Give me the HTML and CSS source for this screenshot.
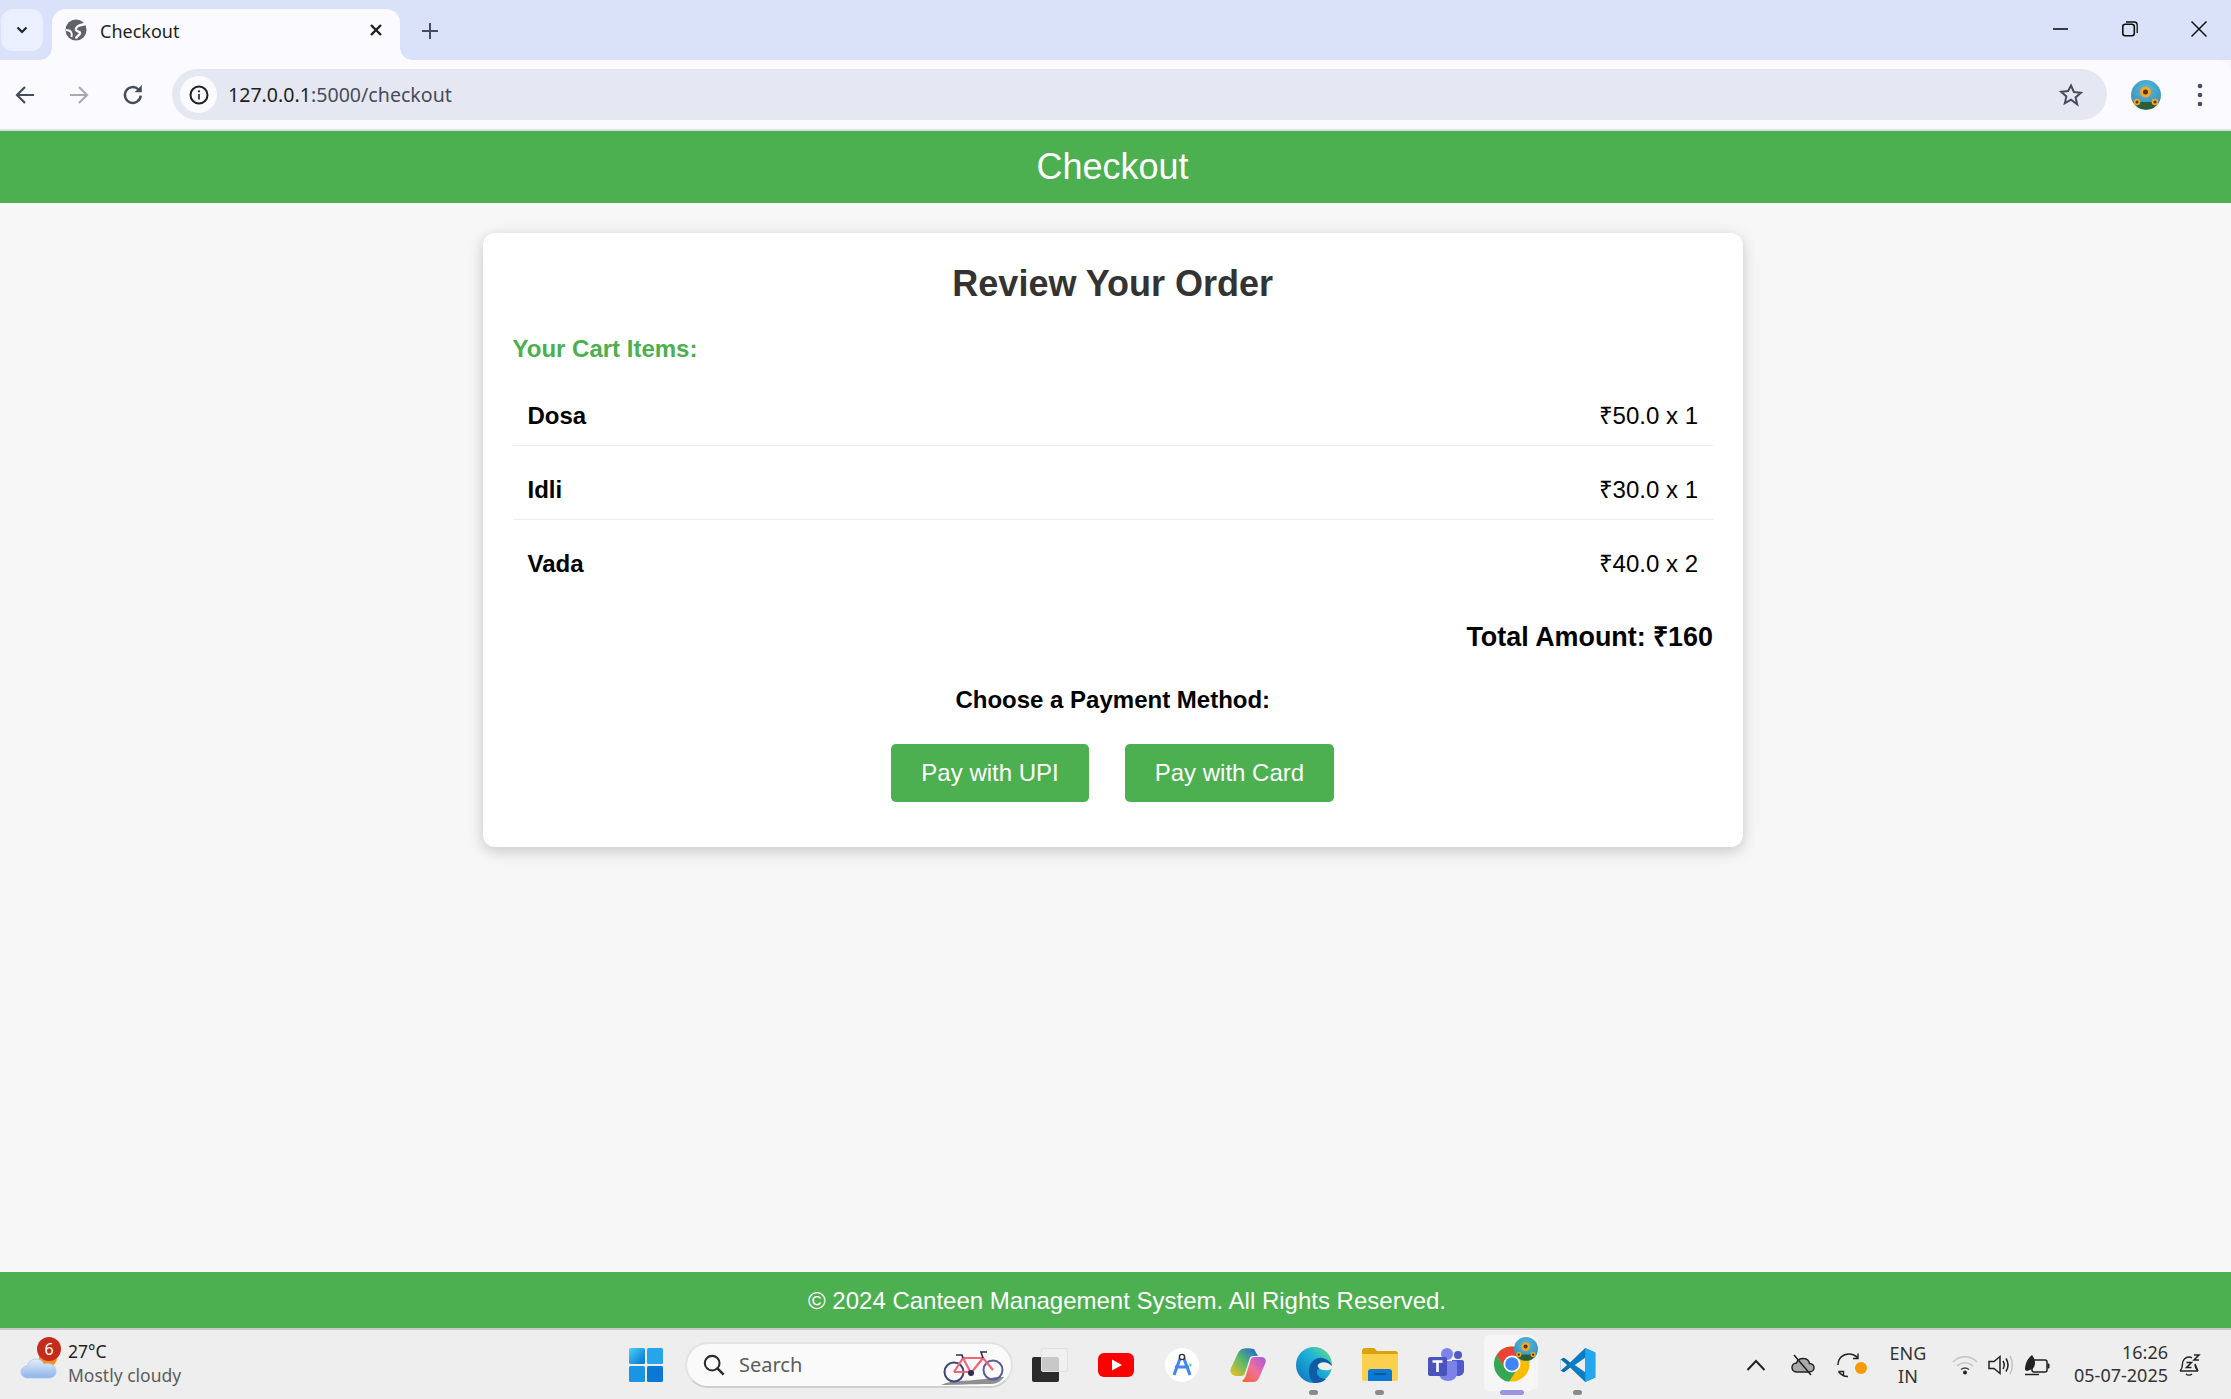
FILE: index.html
```html
<!DOCTYPE html>
<html lang="en">

<head>
    <meta charset="UTF-8">
    <title>Checkout</title>
    <link rel="stylesheet" href="styles.css">
</head>

<body>
    <svg class="defs" width="0" height="0">
        <defs>
            <radialGradient id="skyGrad" cx="50%" cy="30%" r="70%">
                <stop offset="0" stop-color="#5cb8dc" />
                <stop offset="1" stop-color="#2f8fb8" />
            </radialGradient>
            <linearGradient id="cloudGrad" x1="0" y1="0" x2="0" y2="1">
                <stop offset="0" stop-color="#e3eefc" />
                <stop offset="1" stop-color="#8db4ea" />
            </linearGradient>
            <linearGradient id="winGrad" x1="0" y1="0" x2="1" y2="1">
                <stop offset="0" stop-color="#4fd0fc" />
                <stop offset="1" stop-color="#0072cf" />
            </linearGradient>
            <linearGradient id="edgeGrad" x1="0" y1="1" x2="1" y2="0">
                <stop offset="0" stop-color="#0c6fc0" />
                <stop offset=".6" stop-color="#1fb5d6" />
                <stop offset="1" stop-color="#6fe07a" />
            </linearGradient>
            <linearGradient id="copilotA" x1="0" y1="1" x2="1" y2="0">
                <stop offset="0" stop-color="#f3c21c" />
                <stop offset=".5" stop-color="#58b86b" />
                <stop offset="1" stop-color="#1a5fdc" />
            </linearGradient>
            <linearGradient id="copilotB" x1="0" y1="1" x2="1" y2="0">
                <stop offset="0" stop-color="#f4682c" />
                <stop offset=".5" stop-color="#ef6f9a" />
                <stop offset="1" stop-color="#a45be0" />
            </linearGradient>
            <symbol id="sunflowers" viewBox="0 0 30 30">
                <circle cx="15" cy="15" r="15" fill="url(#skyGrad)" />
                <path d="M2 22h26a15 15 0 0 1-26 0z" fill="#2f5d34" />
                <circle cx="14.500" cy="12" r="5.500" fill="#f5a623" />
                <circle cx="14.500" cy="12" r="2.500" fill="#5a3312" />
                <circle cx="6" cy="22" r="3.300" fill="#f5a623" />
                <circle cx="6" cy="22" r="1.500" fill="#5a3312" />
                <circle cx="24" cy="22" r="3.300" fill="#f5a623" />
                <circle cx="24" cy="22" r="1.500" fill="#5a3312" />
            </symbol>
        </defs>
    </svg>

    <div class="tabstrip">
        <div class="tab-list-btn">
            <svg width="14" height="14" viewBox="0 0 14 14"><path d="M2.500 4.500 7 9l4.500-4.500" fill="none" stroke="#1f2430" stroke-width="2.200" /></svg>
        </div>
        <div class="tab">
            <svg class="tab-globe" width="22" height="22" viewBox="0 0 22 22">
                <circle cx="11" cy="11" r="10.500" fill="#5f6368" />
                <path d="M20 5c-3 1-6 1-7.500 2.500S10 10 11.500 11.500s4 1 3.500 3-3.500 2-4 5" fill="none" stroke="#fafaff" stroke-width="2.400" />
                <path d="M1 11c2 0 4 .5 5 2s1 3 .5 5" fill="none" stroke="#fafaff" stroke-width="2" />
            </svg>
            <span class="tab-title">Checkout</span>
            <svg class="tab-close" width="14" height="14" viewBox="0 0 14 14"><path d="M2 2l10 10M12 2 2 12" stroke="#1f1f1f" stroke-width="2.400" /></svg>
        </div>
        <svg class="tab-new" width="16" height="16" viewBox="0 0 16 16"><path d="M8 0v16M0 8h16" stroke="#474c5c" stroke-width="2" /></svg>
        <div class="win-controls">
            <svg width="16" height="16" viewBox="0 0 16 16"><path d="M0 8h15" stroke="#111" stroke-width="1.600" /></svg>
            <svg width="16" height="16" viewBox="0 0 16 16"><rect x=".8" y="3.200" width="11.500" height="11.500" rx="2.500" fill="none" stroke="#111" stroke-width="1.600" /><path d="M4 1h8.500A3 3 0 0 1 15.200 4v8" fill="none" stroke="#111" stroke-width="1.300" /></svg>
            <svg width="16" height="16" viewBox="0 0 16 16"><path d="M.5.500l15 15M15.500.500l-15 15" stroke="#111" stroke-width="1.500" /></svg>
        </div>
    </div>

    <div class="toolbar">
        <div class="nav-btn">
            <svg width="20" height="20" viewBox="0 0 20 20"><path d="M19 10H2M10 2l-8 8 8 8" fill="none" stroke="#474c5c" stroke-width="2.200" /></svg>
        </div>
        <div class="nav-btn">
            <svg width="20" height="20" viewBox="0 0 20 20"><path d="M1 10h17M10 2l8 8-8 8" fill="none" stroke="#a9abb3" stroke-width="2.200" /></svg>
        </div>
        <div class="nav-btn">
            <svg width="22" height="22" viewBox="0 0 20 20"><path d="M17 10.500A7.200 7.200 0 1 1 15 5" fill="none" stroke="#474c5c" stroke-width="2.200" /><path d="M18 1v6.500h-6.500z" fill="#474c5c" /></svg>
        </div>
        <div class="omnibox">
            <div class="site-info">
                <svg width="20" height="20" viewBox="0 0 20 20"><circle cx="10" cy="10" r="8.500" fill="none" stroke="#1f1f1f" stroke-width="2" /><path d="M10 9v5.500" stroke="#1f1f1f" stroke-width="1.600" /><circle cx="10" cy="6.300" r="1.100" fill="#1f1f1f" /></svg>
            </div>
            <span class="url"><span class="url-host">127.0.0.1</span>:5000/checkout</span>
            <svg class="star" width="24" height="24" viewBox="0 0 24 24"><path d="M12 2.500l2.900 6.500 7 .7-5.300 4.700 1.600 6.900L12 16.700l-6.200 3.600 1.600-6.900-5.300-4.700 7-.7z" fill="none" stroke="#474c5c" stroke-width="2" /></svg>
        </div>
        <svg class="avatar" width="30" height="30"><use href="#sunflowers" /></svg>
        <svg class="kebab" width="6" height="24" viewBox="0 0 6 24"><circle cx="3" cy="3" r="2.300" fill="#474c5c" /><circle cx="3" cy="12" r="2.300" fill="#474c5c" /><circle cx="3" cy="21" r="2.300" fill="#474c5c" /></svg>
    </div>

    <header class="site-header">
        <h1>Checkout</h1>
    </header>

    <main class="content">
        <div class="card">
            <h2>Review Your Order</h2>
            <h3>Your Cart Items:</h3>
            <ul class="cart">
                <li><strong>Dosa</strong><span>₹50.0 x 1</span></li>
                <li><strong>Idli</strong><span>₹30.0 x 1</span></li>
                <li><strong>Vada</strong><span>₹40.0 x 2</span></li>
            </ul>
            <p class="total">Total Amount: ₹160</p>
            <p class="choose">Choose a Payment Method:</p>
            <div class="pay-buttons">
                <a class="btn">Pay with UPI</a>
                <a class="btn">Pay with Card</a>
            </div>
        </div>
    </main>

    <footer class="site-footer">© 2024 Canteen Management System. All Rights Reserved.</footer>

    <div class="taskbar">
        <div class="weather">
            <div class="weather-icon">
                <svg width="38" height="42" viewBox="0 0 38 42">
                    <circle cx="28" cy="14" r="9" fill="#f5901e" />
                    <path transform="translate(0 -6)" d="M8 40c-4 0-7-2.500-7-6s3-6 6-6c1-4 5-7 9-7 4 0 7 2 8 5 1-.5 2-.7 3-.7 5 0 9 3.500 9 8s-3 6.700-7 6.700z" fill="url(#cloudGrad)" stroke="#a9c6ef" stroke-width=".8" />
                </svg>
                <span class="badge">6</span>
            </div>
            <div class="weather-text">
                <span class="temp">27°C</span>
                <span class="cond">Mostly cloudy</span>
            </div>
        </div>

        <div class="tb-cell">
            <svg width="34" height="34" viewBox="0 0 34 34">
                <rect x="0" y="0" width="16" height="16" rx="1.500" fill="url(#winGrad)" />
                <rect x="18" y="0" width="16" height="16" rx="1.500" fill="#28a5ea" />
                <rect x="0" y="18" width="16" height="16" rx="1.500" fill="#1a95e4" />
                <rect x="18" y="18" width="16" height="16" rx="1.500" fill="#0a78d4" />
            </svg>
        </div>

        <div class="search">
            <svg width="22" height="22" viewBox="0 0 24 24"><circle cx="10" cy="10" r="8" fill="none" stroke="#2b2b2b" stroke-width="2.300" /><path d="M15.500 15.500 22.500 22.500" stroke="#2b2b2b" stroke-width="2.800" /></svg>
            <span class="search-label">Search</span>
            <svg class="bike" width="64" height="36" viewBox="0 0 64 36">
                <path d="M0 35c14 0 30-1 50-1 6 0 10-3 13-7l-8 0c-16 4-38 3-50 6z" fill="#8f8f8f" />
                <circle cx="13" cy="22" r="9.500" fill="none" stroke="#3f4478" stroke-width="2" />
                <circle cx="52" cy="20" r="9.500" fill="none" stroke="#5a5f9a" stroke-width="2" />
                <path d="M13 22 22 8h20l10 12M22 8l8 15 12-15M13 22h17" fill="none" stroke="#f2647a" stroke-width="2.200" />
                <path d="M42 8l-2-6h6M22 8l-1-3h-6" fill="none" stroke="#2b2e55" stroke-width="1.600" />
                <circle cx="30" cy="23" r="3" fill="#2b2e55" />
            </svg>
        </div>

        <div class="tb-cell">
            <div class="taskview">
                <span class="tv-back"></span>
                <span class="tv-front"></span>
            </div>
        </div>
        <div class="tb-cell">
            <svg width="36" height="24" viewBox="0 0 36 24"><rect width="36" height="24" rx="6" fill="#f00" /><path d="M14 6.500v11l10-5.500z" fill="#fff" /></svg>
        </div>
        <div class="tb-cell">
            <svg width="34" height="34" viewBox="0 0 34 34">
                <circle cx="17" cy="17" r="17" fill="#fff" />
                <path d="M16 8 9 27M18 8l7 19M10 19h14" fill="none" stroke="#4285f4" stroke-width="3" />
                <path d="M24 15l3 2-2 2z" fill="#3ddc84" />
                <circle cx="17" cy="9" r="2.600" fill="#fff" stroke="#333" stroke-width="1.400" />
            </svg>
        </div>
        <div class="tb-cell">
            <svg width="36" height="34" viewBox="0 0 36 34">
                <path d="M12 1C14 0 20 0 24 1L28 8H23C21 8 20 9 19.500 11L15 25C14 28 12 28 9 28H6C2 28-1 24 1 20L8 5C9 3 10 2 12 1Z" fill="url(#copilotA)" />
                <path d="M24 34C26 34 28 32 29 30L35 16C37 12 35 9 31 9H24C22 9 21 10 20.500 12L16 27C15 30 14 31 12 33 13 34 14 34 16 34Z" fill="url(#copilotB)" />
            </svg>
        </div>
        <div class="tb-cell running">
            <svg width="36" height="36" viewBox="0 0 36 36">
                <circle cx="18" cy="18" r="18" fill="url(#edgeGrad)" />
                <path d="M13 24C13 15 20 10 26 11 32 12 36 16 36 20 36 24 30 22 26 22 24 22 22 21 21 24 20 28 24 32 30 32 27 35 23 36 18 36 14 33 13 29 13 24Z" fill="#0f5ba6" />
                <path d="M36 19C33 16 28 14 24 16 22 17 21 19 22 20 24 24 32 24 36 22Z" fill="#eeeeee" />
            </svg>
        </div>
        <div class="tb-cell running">
            <svg width="36" height="33" viewBox="0 0 36 33">
                <path d="M0 3c0-1.500 1-3 3-3h9l3 3h18c2 0 3 1 3 3v3H0z" fill="#dca20d" />
                <path d="M0 6h36v25c0 1-1 2-2 2H2c-1 0-2-1-2-2z" fill="#fcd04f" />
                <path d="M6 33v-9c0-2 1-3 3-3h18c2 0 3 1 3 3v9z" fill="#0a78d4" />
                <path d="M12 26h12" stroke="#044f8c" stroke-width="1.600" />
            </svg>
        </div>
        <div class="tb-cell">
            <svg width="36" height="33" viewBox="0 0 36 33">
                <circle cx="19" cy="6" r="6" fill="#7b83eb" />
                <circle cx="30" cy="7" r="4" fill="#5059c9" />
                <path d="M24 12h10c1 0 2 1 2 2v9c0 3-3 5-6 5s-4-1-5-3z" fill="#5059c9" />
                <path d="M11 13h17c1 0 1 1 1 2v10c0 5-4 8-9 8s-9-3-9-8z" fill="#7b83eb" />
                <rect x="0" y="9" width="19" height="19" rx="2" fill="#4b53bc" />
                <path d="M4.500 13.500h10M9.500 13.500V24" stroke="#fff" stroke-width="2.600" />
            </svg>
        </div>
        <div class="tb-cell active">
            <span class="active-box"></span>
            <svg class="chrome-logo" width="36" height="36" viewBox="0 0 36 36">
                <circle cx="18" cy="18" r="17.500" fill="#fbbc04" />
                <path d="M18 10h15.600A18 18 0 0 0 2.400 9L11 22a8 8 0 0 1 7-12z" fill="#ea4335" />
                <path d="M11 22 2.400 9A18 18 0 0 0 15 35.800L22 25a8 8 0 0 1-11-3z" fill="#34a853" />
                <circle cx="18" cy="18" r="8.500" fill="#fff" />
                <circle cx="18" cy="18" r="6.800" fill="#4285f4" />
            </svg>
            <svg class="chrome-badge" width="24" height="24"><use href="#sunflowers" /></svg>
        </div>
        <div class="tb-cell running">
            <svg width="36" height="36" viewBox="0 0 100 100">
                <path d="M70 3 28 43 11 30 2 35v30l9 5 17-13 42 40 28-12V15zM70 30v40L41 50z" fill="#0a7cc4" />
                <path d="M70 3l28 12v70L70 97z" fill="#22a7f0" />
                <path d="M2 35 11 30 28 43 20 50zM2 65l9 5 17-13-8-7z" fill="#0a6cb0" />
                <path d="M2 35v30l18-15z" fill="#eeeeee" />
            </svg>
        </div>

        <div class="tray">
            <div class="tray-item">
                <svg width="20" height="12" viewBox="0 0 20 12"><path d="M1.500 11 10 2l8.500 9" fill="none" stroke="#222" stroke-width="2" /></svg>
            </div>
            <div class="tray-item">
                <svg width="24" height="22" viewBox="0 0 24 22">
                    <path d="M6 18c-3 0-5-2-5-4.500S3 9 5.500 9C6.500 6 9 4.500 12 4.500c3.500 0 6 2 6.500 5 2.800 0 4.500 2 4.500 4.300S21 18 18 18z" fill="#aaa" stroke="#222" stroke-width="1.500" />
                    <path d="M3 1l17 20" stroke="#222" stroke-width="1.500" />
                </svg>
            </div>
            <div class="tray-item sync">
                <svg width="24" height="26" viewBox="0 0 24 26">
                    <path d="M1 13C1 6 6 2 12 2c3 0 6 1 9 4M21 1.500V6.500h-5" fill="none" stroke="#222" stroke-width="1.400" />
                    <path d="M1.500 19.500h5v5M1.500 19.500C4 23 7 24.500 11 24.500" fill="none" stroke="#222" stroke-width="1.400" />
                </svg>
                <span class="sync-dot"></span>
            </div>
            <div class="tray-lang">ENG<br>IN</div>
            <div class="tray-gap"></div>
            <div class="tray-item small">
                <svg width="26" height="20" viewBox="0 0 26 20">
                    <path d="M1 7c7-7 17-7 24 0M5 11c5-4.500 11-4.500 16 0" fill="none" stroke="#c4c4c4" stroke-width="1.500" />
                    <path d="M9 14.500c2.500-2 5.500-2 8 0" fill="none" stroke="#444" stroke-width="1.500" />
                    <circle cx="13" cy="17.500" r="2" fill="#222" />
                </svg>
            </div>
            <div class="tray-item small">
                <svg width="26" height="24" viewBox="0 0 26 24">
                    <path d="M1 8.500h5L12 3.500v17l-6-5H1z" fill="none" stroke="#222" stroke-width="1.500" />
                    <path d="M15 8c1.500 2.500 1.500 5.500 0 8M18 5.500c2.500 4 2.500 9 0 13" fill="none" stroke="#222" stroke-width="1.500" />
                    <path d="M22 3c3 5 3 13 0 18" fill="none" stroke="#c4c4c4" stroke-width="1.500" />
                </svg>
            </div>
            <div class="tray-item small">
                <svg width="26" height="22" viewBox="0 0 26 22">
                    <rect x="8" y="6" width="15" height="12" rx="2" fill="none" stroke="#222" stroke-width="1.500" />
                    <path d="M23.500 9.500h1a1 1 0 0 1 1 1v3a1 1 0 0 1-1 1h-1z" fill="#222" />
                    <path d="M1 16C1 9 4 4 8 1 11 5 12 9 10 13 8 16 5 16 3 17z" fill="#222" />
                    <path d="M1 20.500h14" stroke="#222" stroke-width="1.500" />
                </svg>
            </div>
            <div class="clock">
                <span>16:26</span>
                <span>05-07-2025</span>
            </div>
            <div class="tray-item">
                <svg width="22" height="24" viewBox="0 0 22 24">
                    <path d="M1 18c2-2 2.500-3 2.500-7s3-7 6.500-7c1 0 2 .2 3 .8M16 11c0 4 1 5 3 7zM1 18h18M7 21c1.500 1.500 4.500 1.500 6 0" fill="none" stroke="#222" stroke-width="1.400" />
                    <path d="M7.500 9.500h5l-5 5h5M15 2h5l-5 5h5" fill="none" stroke="#222" stroke-width="1.500" />
                </svg>
            </div>
        </div>
    </div>
</body>

</html>
```

FILE: styles.css
```css
* {
    box-sizing: border-box;
}

html,
body {
    height: 100%;
}

body {
    margin: 0;
    display: flex;
    flex-direction: column;
    height: 1399px;
    background-color: #f7f7f7;
    font-family: 'Liberation Sans', Arial, sans-serif;
    font-size: 24px;
    color: #000;
    overflow: hidden;
}

.defs {
    position: absolute;
}

/* browser top */
.tabstrip {
    flex: none;
    height: 60px;
    display: flex;
    align-items: flex-end;
    background-color: #dae2f9;
    padding-left: 1px;
}

.tab-list-btn {
    width: 42px;
    height: 42px;
    margin-bottom: 9px;
    display: flex;
    align-items: center;
    justify-content: center;
    background-color: #eaf0fd;
    border-radius: 12px;
}

.tab {
    position: relative;
    width: 348px;
    height: 51px;
    margin-left: 9px;
    display: flex;
    align-items: center;
    padding: 0 17px 9px 13px;
    background-color: #fafaff;
    border-radius: 14px 14px 0 0;
}

.tab::before,
.tab::after {
    content: "";
    position: absolute;
    bottom: 0;
    width: 12px;
    height: 12px;
    background: radial-gradient(circle at 0 0, #dae2f9 11.500px, #fafaff 12px);
}

.tab::before {
    left: -12px;
}

.tab::after {
    right: -12px;
    background: radial-gradient(circle at 100% 0, #dae2f9 11.500px, #fafaff 12px);
}

.tab-title {
    margin: 2px 0 0 13px;
    flex: 1;
    font-family: 'Noto Sans', sans-serif;
    font-size: 18px;
    color: #1f1f1f;
}

.tab-new {
    margin: 0 0 21px 22px;
}

.win-controls {
    margin-left: auto;
    align-self: flex-start;
    display: flex;
    gap: 53px;
    padding: 21px 24px 0 0;
}

.toolbar {
    flex: none;
    height: 71px;
    display: flex;
    align-items: center;
    padding: 0 20px 0 0;
    background-color: #fafaff;
    border-bottom: 2px solid #dcdfea;
    border-radius: 0 14px 0 0;
}

.nav-btn {
    width: 54px;
    height: 40px;
    display: flex;
    align-items: center;
    justify-content: center;
}

.nav-btn:first-child {
    margin-left: -2px;
}

.omnibox {
    width: 1935px;
    height: 51px;
    margin-left: 12px;
    display: flex;
    align-items: center;
    padding: 0 24px 0 8px;
    background-color: #e5e8f3;
    border-radius: 26px;
}

.site-info {
    width: 37px;
    height: 37px;
    display: flex;
    align-items: center;
    justify-content: center;
    background-color: #fafaff;
    border-radius: 50%;
}

.url {
    margin-left: 11px;
    flex: 1;
    font-family: 'Noto Sans', sans-serif;
    font-size: 19.600px;
    color: #474c5c;
}

.url-host {
    color: #1f1f1f;
}

.avatar {
    margin-left: 24px;
}

.kebab {
    margin-left: 36px;
}

/* page */
.site-header {
    flex: none;
    height: 72px;
    display: flex;
    align-items: center;
    justify-content: center;
    padding-right: 6px;
    background-color: #4caf50;
    color: #fff;
}

.site-header h1 {
    margin: 0;
    font-size: 36px;
    font-weight: normal;
}

.content {
    flex: 1;
    padding-top: 30px;
}

.card {
    width: 1260.500px;
    margin-left: 482.500px;
    padding: 30px;
    background-color: #fff;
    border-radius: 12px;
    box-shadow: 0 4px 15px rgba(0, 0, 0, 0.2);
}

.card h2 {
    margin: 0 0 31px;
    font-size: 36px;
    line-height: 41px;
    text-align: center;
    color: #333;
}

.card h3 {
    margin: 0 0 8.500px;
    font-size: 24px;
    line-height: 28px;
    color: #4caf50;
}

.cart {
    list-style: none;
    margin: 0;
    padding: 0;
}

.cart li {
    display: flex;
    justify-content: space-between;
    padding: 30px 15px 15px;
    line-height: 28px;
    border-bottom: 1px solid #eee;
}

.cart li:last-child {
    border-bottom: none;
}

.total {
    margin: 28.500px 0 0;
    font-size: 26.900px;
    line-height: 32px;
    font-weight: bold;
    text-align: right;
}

.choose {
    margin: 33px 0 0;
    line-height: 28px;
    font-weight: bold;
    text-align: center;
}

.pay-buttons {
    display: flex;
    justify-content: center;
    gap: 36px;
    margin: 30px 0 15px;
}

.btn {
    padding: 15px 30px;
    line-height: 28px;
    background-color: #4caf50;
    color: #fff;
    border-radius: 5px;
}

.site-footer {
    flex: none;
    height: 56px;
    display: flex;
    align-items: center;
    justify-content: center;
    padding: 2px 0 0 23px;
    background-color: #4caf50;
    color: #fff;
}

/* windows taskbar */
.taskbar {
    flex: none;
    height: 71px;
    display: flex;
    align-items: center;
    background-color: #eeeeee;
    border-top: 2px solid #c9c9c9;
    font-family: 'Noto Sans', sans-serif;
}

.weather {
    width: 613px;
    display: flex;
    align-items: center;
    padding-left: 20px;
}

.weather-icon {
    position: relative;
    width: 38px;
    height: 42px;
}

.badge {
    position: absolute;
    top: -7px;
    left: 17px;
    width: 24px;
    height: 24px;
    line-height: 24px;
    border-radius: 50%;
    background-color: #c42b1c;
    color: #fff;
    font-size: 16px;
    text-align: center;
}

.weather-text {
    display: flex;
    flex-direction: column;
    margin: 0 0 3px 10px;
    font-size: 17.500px;
    line-height: 24px;
}

.temp {
    color: #1f1f1f;
}

.cond {
    color: #5c5c5c;
}

.tb-cell {
    position: relative;
    width: 66px;
    height: 69px;
    display: flex;
    align-items: center;
    justify-content: center;
}

.tb-cell.running::after,
.tb-cell.active::after {
    content: "";
    position: absolute;
    left: 28px;
    bottom: 4px;
    width: 9px;
    height: 5px;
    background-color: #8a8a8a;
    border-radius: 3px;
}

.tb-cell.active::after {
    left: 21px;
    width: 24px;
    background-color: #9b95e0;
}

.search {
    width: 328px;
    height: 46px;
    margin: 0 4px 0 6px;
    display: flex;
    align-items: center;
    padding: 0 6px 0 16px;
    background-color: #fafafa;
    border: 2px solid #e2e2e2;
    border-bottom-color: #cfcfcf;
    border-radius: 23px;
}

.search-label {
    margin-left: 14px;
    flex: 1;
    font-size: 20px;
    color: #5c5c5c;
}

.bike {
    margin-top: 6px;
}

.taskview {
    position: relative;
    width: 36px;
    height: 34px;
}

.tv-back {
    position: absolute;
    left: 0;
    bottom: 0;
    width: 27px;
    height: 25px;
    background-color: #2b2b2b;
    border-radius: 2px;
}

.tv-front {
    position: absolute;
    right: 0;
    top: 0;
    width: 27px;
    height: 24px;
    background-color: rgba(240, 240, 240, 0.8);
    border: 1px solid #e2e2e2;
    border-radius: 2px;
}

.active-box {
    position: absolute;
    left: 5px;
    top: 5px;
    width: 50px;
    height: 56px;
    background-color: #f6f6f6;
    border-radius: 5px;
    box-shadow: 6px 0 0 -2px #f4f4f4;
}

.chrome-logo {
    position: relative;
    top: -1px;
}

.chrome-badge {
    position: absolute;
    left: 35px;
    top: 7px;
}

.tray {
    margin-left: auto;
    display: flex;
    align-items: center;
    padding-right: 17px;
}

.tray-item {
    position: relative;
    width: 48px;
    height: 48px;
    display: flex;
    align-items: center;
    justify-content: center;
}

.tray-item:first-child {
    width: 42px;
    padding-right: 5px;
}

.tray-item.small {
    width: 36px;
}

.sync {
    padding-right: 4px;
}

.sync-dot {
    position: absolute;
    left: 28px;
    top: 21px;
    width: 12px;
    height: 12px;
    background-color: #f59a00;
    border-radius: 50%;
}

.tray-lang {
    width: 66px;
    text-align: center;
    font-size: 18px;
    line-height: 23px;
    color: #333;
}

.tray-gap {
    width: 6px;
}

.clock {
    width: 111px;
    margin: 0 -2px 2px 2px;
    display: flex;
    flex-direction: column;
    text-align: right;
    font-size: 18px;
    line-height: 23px;
    color: #333;
}
```
